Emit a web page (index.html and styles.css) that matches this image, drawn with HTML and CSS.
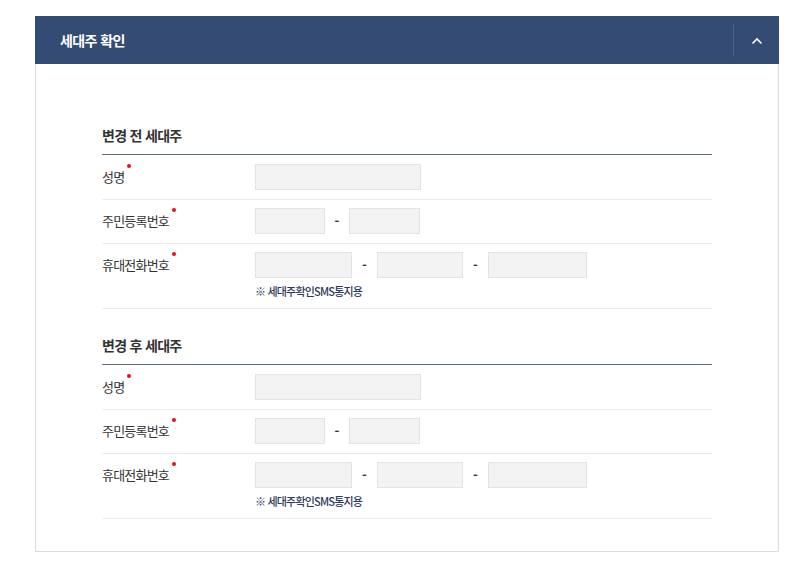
FILE: index.html
```html
<!DOCTYPE html>
<html lang="ko">
<head>
<meta charset="utf-8">
<link rel="stylesheet" href="styles.css">
</head>
<body>
<div class="panel">
  <div class="panel-head">
    <h2 class="panel-title">세대주 확인</h2>
    <button class="toggle" type="button" aria-label="접기">
      <svg width="12" height="8" viewBox="0 0 12 8"><path d="M1.5 6.5 L6 2 L10.5 6.5" fill="none" stroke="#fff" stroke-width="1.6"/></svg>
    </button>
  </div>
  <div class="panel-body">
    <section class="group">
      <h3 class="group-title">변경 전 세대주</h3>
      <div class="row">
        <div class="label"><span class="req">성명</span></div>
        <div class="field"><span class="input w165"></span></div>
      </div>
      <div class="row">
        <div class="label"><span class="req">주민등록번호</span></div>
        <div class="field"><span class="input w70"></span><span class="dash">-</span><span class="input w71"></span></div>
      </div>
      <div class="row">
        <div class="label"><span class="req">휴대전화번호</span></div>
        <div class="field-col">
          <div class="field"><span class="input w97"></span><span class="dash wide">-</span><span class="input w86"></span><span class="dash wide">-</span><span class="input w99"></span></div>
          <p class="note">※ 세대주확인SMS통지용</p>
        </div>
      </div>
    </section>
    <section class="group">
      <h3 class="group-title">변경 후 세대주</h3>
      <div class="row">
        <div class="label"><span class="req">성명</span></div>
        <div class="field"><span class="input w165"></span></div>
      </div>
      <div class="row">
        <div class="label"><span class="req">주민등록번호</span></div>
        <div class="field"><span class="input w70"></span><span class="dash">-</span><span class="input w71"></span></div>
      </div>
      <div class="row">
        <div class="label"><span class="req">휴대전화번호</span></div>
        <div class="field-col">
          <div class="field"><span class="input w97"></span><span class="dash wide">-</span><span class="input w86"></span><span class="dash wide">-</span><span class="input w99"></span></div>
          <p class="note">※ 세대주확인SMS통지용</p>
        </div>
      </div>
    </section>
  </div>
</div>
</body>
</html>
```
FILE: styles.css
```css
* { box-sizing: border-box; }
body {
  margin: 0;
  padding: 16px 18px 0 35px;
  background: #fff;
  font-family: "Noto Sans CJK KR", "Noto Sans", sans-serif;
  color: #333;
}
.panel {
  width: 744px;
  border: 1px solid #dcdcdc;
  border-top: 0;
}
.panel-head {
  height: 48px;
  margin: 0 -1px;
  background: #344b74;
  display: flex;
  align-items: center;
  justify-content: space-between;
  padding-left: 25px;
}
.panel-title {
  margin: 0;
  font-size: 14px;
  font-weight: 700;
  color: #fff;
  letter-spacing: -0.6px;
}
.toggle {
  width: 46px;
  height: 33px;
  border: 0;
  border-left: 1px solid #4d6186;
  background: transparent;
  display: flex;
  align-items: center;
  justify-content: center;
  padding: 0 0 0 1px;
  margin-top: 1px;
}
.panel-body {
  padding: 61px 66px 32px 66px;
}
.group + .group { margin-top: 26px; }
.group-title {
  margin: 0;
  font-size: 14px;
  font-weight: 700;
  color: #333;
  letter-spacing: -0.7px;
  line-height: 20px;
  padding-bottom: 9px;
  border-bottom: 1px solid #5b6b89;
}
.row {
  display: flex;
  align-items: flex-start;
  padding: 8px 0 9px;
  border-bottom: 1px solid #ebebeb;
}
.group-title + .row { padding-top: 9px; }
.label {
  width: 153px;
  flex: none;
  font-size: 13px;
  letter-spacing: -0.8px;
  color: #333;
  line-height: 26px;
}
.req { position: relative; }
.req::after {
  content: "";
  position: absolute;
  right: -7px;
  top: -3px;
  width: 4px;
  height: 4px;
  border-radius: 50%;
  background: #e0141e;
}
.field {
  display: flex;
  align-items: center;
}
.input {
  display: block;
  height: 26px;
  background: #f3f3f3;
  border: 1px solid #e3e3e3;
}
.w165 { width: 166px; }
.w70 { width: 70px; }
.w71 { width: 71px; }
.w97 { width: 97px; }
.w86 { width: 86px; }
.w99 { width: 99px; }
.dash {
  width: 24px;
  text-align: center;
  font-size: 13px;
  font-weight: 700;
  color: #333;
  line-height: 26px;
}
.dash.wide { width: 25px; }
.note {
  margin: 5px 0 0;
  font-size: 11px;
  font-weight: 500;
  letter-spacing: -0.8px;
  color: #2b3a5c;
  line-height: 16px;
}
```
